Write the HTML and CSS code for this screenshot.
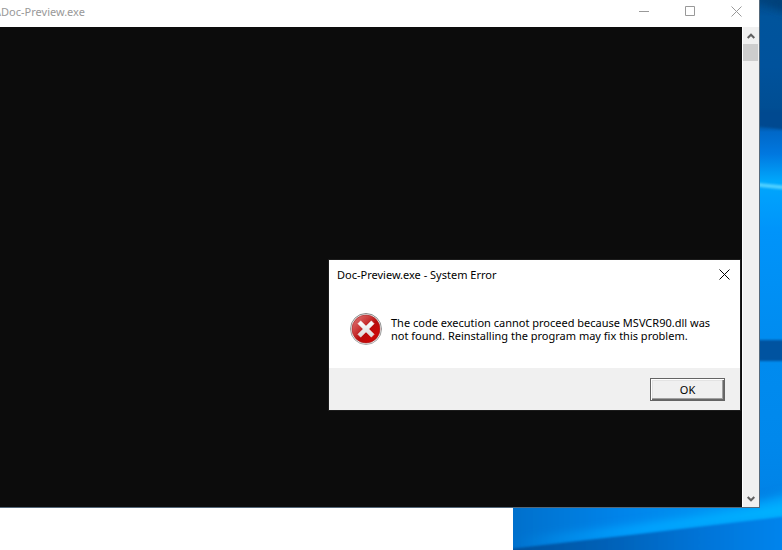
FILE: index.html
```
<!DOCTYPE html>
<html lang="en">
<head>
<meta charset="utf-8">
<title>Doc-Preview.exe</title>
<link rel="stylesheet" href="styles.css">
</head>
<body>
<main class="desktop">
  <svg class="wallpaper" viewBox="0 0 782 550" preserveAspectRatio="none" aria-hidden="true">
    <defs>
      <linearGradient id="side" x1="0" y1="0" x2="0" y2="550" gradientUnits="userSpaceOnUse">
        <stop offset="0" stop-color="#004a8a"/>
        <stop offset=".03" stop-color="#00549c"/>
        <stop offset=".12" stop-color="#00529c"/>
        <stop offset=".225" stop-color="#004c90"/>
        <stop offset=".24" stop-color="#0068c8"/>
        <stop offset=".28" stop-color="#0078e0"/>
        <stop offset=".33" stop-color="#00a8fc"/>
        <stop offset=".36" stop-color="#00a0fc"/>
        <stop offset=".42" stop-color="#0094fa"/>
        <stop offset=".61" stop-color="#008cf0"/>
        <stop offset=".8" stop-color="#0088ec"/>
        <stop offset=".88" stop-color="#0084e8"/>
        <stop offset="1" stop-color="#0070d4"/>
      </linearGradient>
      <linearGradient id="floor" x1="513" y1="0" x2="782" y2="0" gradientUnits="userSpaceOnUse">
        <stop offset="0" stop-color="#0070cc"/>
        <stop offset=".4" stop-color="#0084ea"/>
        <stop offset="1" stop-color="#00a0fa"/>
      </linearGradient>
      <linearGradient id="glow" x1="513" y1="0" x2="782" y2="0" gradientUnits="userSpaceOnUse">
        <stop offset="0" stop-color="#00a4ff" stop-opacity="0"/>
        <stop offset=".5" stop-color="#00a4ff"/>
        <stop offset="1" stop-color="#00b4ff"/>
      </linearGradient>
      <linearGradient id="shade" x1="513" y1="0" x2="782" y2="0" gradientUnits="userSpaceOnUse">
        <stop offset="0" stop-color="#00509c"/>
        <stop offset=".4" stop-color="#0064bc"/>
        <stop offset=".7" stop-color="#0074d8"/>
        <stop offset="1" stop-color="#0084ec"/>
      </linearGradient>
      <filter id="soft" x="-20%" y="-100%" width="140%" height="300%"><feGaussianBlur stdDeviation="4"/></filter>
      <filter id="fine" x="-20%" y="-100%" width="140%" height="300%"><feGaussianBlur stdDeviation="1"/></filter>
    </defs>
    <rect width="782" height="550" fill="url(#side)"/>
    <path d="M750 -5H790V14L750 -2Z" fill="#003f78" filter="url(#soft)"/>
    <path d="M750 110H790V130L750 125Z" fill="#004a90" filter="url(#fine)"/>
    <path d="M750 182L790 186V190L750 186Z" fill="#50d0ff" filter="url(#fine)"/>
    <rect x="740" y="340" width="50" height="21" fill="#0052a0" filter="url(#fine)"/>
    <path d="M490 500H759L800 490V560H490Z" fill="url(#floor)" filter="url(#soft)"/>
    <path d="M500 546L640 530L800 508" fill="none" stroke="url(#glow)" stroke-width="12" filter="url(#soft)"/>
    <path d="M500 550L640 534L790 516V560H500Z" fill="url(#shade)" filter="url(#fine)"/>
  </svg>
  <div class="backdrop"></div>

  <section class="console" aria-label="Doc-Preview.exe">
    <header class="console-bar">
      <h1 class="console-title">\Doc-Preview.exe</h1>
      <div class="controls">
        <button class="control" aria-label="Minimize"><svg width="10" height="11" viewBox="0 0 10 11"><path d="M0 5.5H10"/></svg></button>
        <button class="control" aria-label="Maximize"><svg width="10" height="11" viewBox="0 0 10 11"><path d="M.5 .5H9.500V9.500H.5Z"/></svg></button>
        <button class="control" aria-label="Close"><svg width="11" height="11" viewBox="0 0 11 11"><path d="M.5 .5L10.500 10.500M10.500 .5L.5 10.500"/></svg></button>
      </div>
    </header>
    <div class="console-body">
      <div class="terminal"></div>
      <div class="scrollbar">
        <button class="arrow" aria-label="Scroll up"><svg width="8" height="6" viewBox="0 0 8 6"><path d="M.7 5L4 1.700L7.300 5"/></svg></button>
        <div class="thumb"></div>
        <button class="arrow arrow-down" aria-label="Scroll down"><svg width="8" height="6" viewBox="0 0 8 6"><path d="M.7 1L4 4.300L7.300 1"/></svg></button>
      </div>
    </div>
  </section>

  <section class="dialog" role="alertdialog" aria-labelledby="dialog-title" aria-describedby="dialog-text">
    <header class="dialog-bar">
      <h2 class="dialog-title" id="dialog-title">Doc-Preview.exe - System Error</h2>
      <button class="dialog-close" aria-label="Close"><svg width="11" height="11" viewBox="0 0 11 11"><path d="M.5 .5L10.500 10.500M10.500 .5L.5 10.500"/></svg></button>
    </header>
    <div class="dialog-body">
      <svg class="error-icon" width="32" height="32" viewBox="0 0 32 32" aria-hidden="true">
        <defs>
          <linearGradient id="rim" x1="0" y1="0" x2="0" y2="1"><stop offset="0" stop-color="#858585"/><stop offset="1" stop-color="#aaa"/></linearGradient>
          <linearGradient id="red" x1="0" y1="0" x2="1" y2="1"><stop offset="0" stop-color="#e08080"/><stop offset=".35" stop-color="#cc3b3b"/><stop offset=".55" stop-color="#b80c0c"/><stop offset=".8" stop-color="#cc0808"/><stop offset="1" stop-color="#a00"/></linearGradient>
          <linearGradient id="cross" x1="0" y1="0" x2="0" y2="1"><stop offset="0" stop-color="#fff"/><stop offset="1" stop-color="#d8d8d8"/></linearGradient>
        </defs>
        <circle cx="16" cy="16" r="15.500" fill="#f2f2f2" stroke="url(#rim)"/>
        <circle cx="16" cy="16" r="14" fill="url(#red)" stroke="#a52222" stroke-width=".6"/>
        <path d="M10.700 7.800L16 13.100L21.300 7.800L24.200 10.700L18.900 16L24.200 21.300L21.300 24.200L16 18.900L10.700 24.200L7.800 21.300L13.100 16L7.800 10.700Z" fill="url(#cross)" stroke="#e8e0e0" stroke-width=".5" stroke-linejoin="round"/>
      </svg>
      <p class="message" id="dialog-text">The code execution cannot proceed because MSVCR90.dll was<br>not found. Reinstalling the program may fix this problem.</p>
    </div>
    <footer class="dialog-footer"><button class="ok">OK</button></footer>
  </section>
</main>
</body>
</html>
```
FILE: styles.css
```
* { box-sizing: border-box; }

body {
  margin: 0;
  font-family: "Noto Sans", "Open Sans", sans-serif;
}

button {
  margin: 0;
  padding: 0;
  border: 0;
  background: none;
  font: inherit;
}

.desktop {
  position: relative;
  height: 100vh;
  overflow: hidden;
}

.wallpaper {
  position: absolute;
  width: 100%;
  height: 100%;
}

.backdrop {
  position: absolute;
  inset: 0 269px 0 0;
  background: #fff;
}

.console {
  position: absolute;
  inset: 0 22px 42px 0;
  display: flex;
  flex-direction: column;
  border: solid #54687a;
  border-width: 0 1px 1px 0;
  background: #fff;
}

.console-bar {
  display: flex;
  justify-content: space-between;
  height: 27px;
}

.console-title,
.dialog-title {
  margin: 0;
  font-size: 11px;
  font-weight: 400;
  line-height: 24px;
  white-space: nowrap;
}

.console-title {
  margin-left: -3px;
  color: #999;
}

.controls { display: flex; }

.control {
  display: grid;
  place-items: center;
  width: 46px;
  height: 23px;
}

.control svg,
.dialog-close svg {
  fill: none;
  stroke: #999;
}

.console-body {
  display: flex;
  flex: 1;
}

.terminal {
  flex: 1;
  background: #0c0c0c;
}

.scrollbar {
  display: flex;
  flex-direction: column;
  width: 17px;
  border-left: 1px solid #fff;
  background: #f0f0f0;
}

.arrow {
  display: grid;
  place-items: center;
  height: 17px;
}

.arrow svg {
  fill: none;
  stroke: #606060;
  stroke-width: 2;
}

.arrow-down { margin-top: auto; }

.thumb {
  height: 17px;
  margin-right: 1px;
  background: #cdcdcd;
}

.dialog {
  position: absolute;
  top: 260px;
  right: 42px;
  width: 411px;
  background: #fff;
  color: #000;
  outline: 1px solid #1c1c1c;
}

.dialog-bar {
  display: flex;
  align-items: center;
  justify-content: space-between;
  height: 29px;
  padding: 0 10px 0 8px;
}

.dialog-close {
  display: grid;
  place-items: center;
  height: 29px;
}

.dialog-close svg { stroke: #000; }

.dialog-body {
  display: flex;
  align-items: center;
  gap: 9px;
  height: 79px;
  padding: 0 21px;
}

.error-icon { flex: none; }

.message {
  margin: 0;
  font-size: 11px;
  line-height: 13px;
  white-space: nowrap;
}

.dialog-footer {
  display: flex;
  align-items: center;
  justify-content: flex-end;
  height: 42px;
  padding: 0 15px;
  background: #f0f0f0;
}

.ok {
  width: 75px;
  height: 23px;
  border: 1px solid #646464;
  background: #f0f0f0;
  box-shadow: inset 1px 1px #fff, inset -1px -1px #696969, inset -2px -2px #a0a0a0, inset 2px 2px #e3e3e3;
  color: #000;
  font-size: 11px;
  line-height: 13px;
}
```
